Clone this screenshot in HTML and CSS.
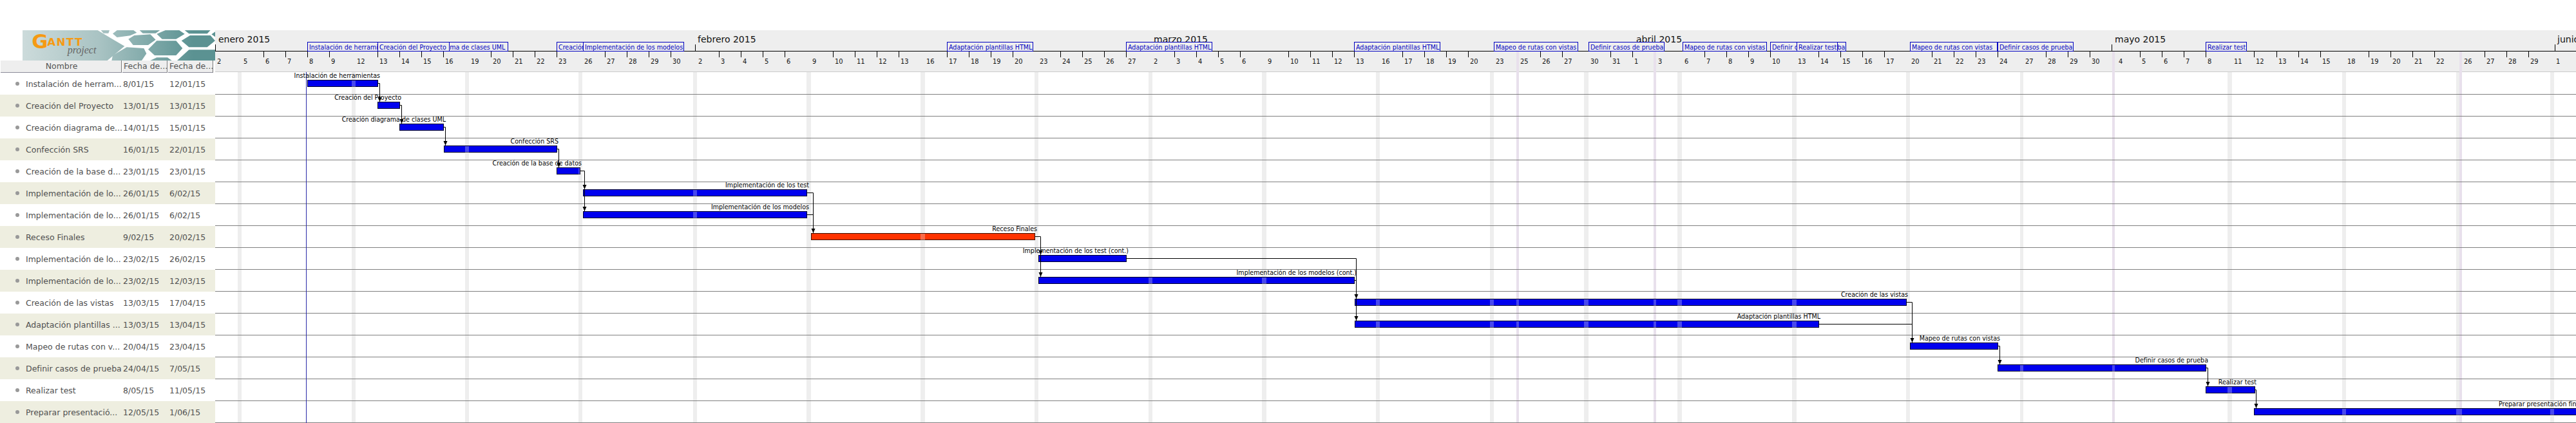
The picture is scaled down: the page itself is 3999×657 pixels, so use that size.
FILE: index.html
```html
<!DOCTYPE html>
<html lang="es">
<head>
    <meta charset="UTF-8">
    <title>GanttProject</title>
    <link rel="stylesheet" href="styles.css">
</head>
<body>
<div class="page">
    <div class="panel">
        <svg class="logo" viewBox="105 141 897 141" width="299" height="47">
            <defs>
                <linearGradient id="teal" gradientUnits="userSpaceOnUse" x1="105" y1="0" x2="900" y2="0">
                    <stop offset="0" stop-color="#ccdbdb"/>
                    <stop offset="0.45" stop-color="#a9c3c3"/>
                    <stop offset="1" stop-color="#5b9292"/>
                </linearGradient>
            </defs>
            <g fill="url(#teal)">
                <polygon points="105,141 455,141 520,180 580,215 500,282 105,282"/>
                <polygon points="470,141 510,141 505,155 482,155"/>
                <polygon points="525,157 545,141 622,141 637,152 606,166 545,174"/>
                <polygon points="650,141 745,141 725,155 665,155"/>
                <polygon points="598,182 625,165 700,160 725,185 690,210 620,210"/>
                <polygon points="730,158 770,141 835,141 860,158 820,182 755,182"/>
                <polygon points="860,141 980,141 965,157 880,157"/>
                <polygon points="845,190 885,165 980,165 1002,190 965,220 880,220"/>
                <polygon points="690,230 730,190 820,190 850,225 820,258 720,258"/>
                <polygon points="520,282 525,258 590,220 670,225 682,250 660,282"/>
                <polygon points="825,282 880,232 1002,232 1002,282"/>
                <polygon points="700,282 730,268 780,268 800,282"/>
                <polygon points="985,160 1002,148 1002,172"/>
            </g>
            <text class="logo-g" x="148" y="226">G</text>
            <text class="logo-antt" x="220" y="214">ANTT</text>
            <text class="logo-project" x="314" y="248">project</text>
        </svg>
        <div class="cols">
            <div class="col col-name">Nombre</div>
            <div class="col">Fecha de...</div>
            <div class="col">Fecha de...</div>
        </div>
        <div class="row"><span class="dot"></span><span class="name">Instalación de herram...</span><span class="date">8/01/15</span><span class="date">12/01/15</span></div>
        <div class="row"><span class="dot"></span><span class="name">Creación del Proyecto</span><span class="date">13/01/15</span><span class="date">13/01/15</span></div>
        <div class="row"><span class="dot"></span><span class="name">Creación diagrama de...</span><span class="date">14/01/15</span><span class="date">15/01/15</span></div>
        <div class="row"><span class="dot"></span><span class="name">Confección SRS</span><span class="date">16/01/15</span><span class="date">22/01/15</span></div>
        <div class="row"><span class="dot"></span><span class="name">Creación de la base d...</span><span class="date">23/01/15</span><span class="date">23/01/15</span></div>
        <div class="row"><span class="dot"></span><span class="name">Implementación de lo...</span><span class="date">26/01/15</span><span class="date">6/02/15</span></div>
        <div class="row"><span class="dot"></span><span class="name">Implementación de lo...</span><span class="date">26/01/15</span><span class="date">6/02/15</span></div>
        <div class="row"><span class="dot"></span><span class="name">Receso Finales</span><span class="date">9/02/15</span><span class="date">20/02/15</span></div>
        <div class="row"><span class="dot"></span><span class="name">Implementación de lo...</span><span class="date">23/02/15</span><span class="date">26/02/15</span></div>
        <div class="row"><span class="dot"></span><span class="name">Implementación de lo...</span><span class="date">23/02/15</span><span class="date">12/03/15</span></div>
        <div class="row"><span class="dot"></span><span class="name">Creación de las vistas</span><span class="date">13/03/15</span><span class="date">17/04/15</span></div>
        <div class="row"><span class="dot"></span><span class="name">Adaptación plantillas ...</span><span class="date">13/03/15</span><span class="date">13/04/15</span></div>
        <div class="row"><span class="dot"></span><span class="name">Mapeo de rutas con v...</span><span class="date">20/04/15</span><span class="date">23/04/15</span></div>
        <div class="row"><span class="dot"></span><span class="name">Definir casos de prueba</span><span class="date">24/04/15</span><span class="date">7/05/15</span></div>
        <div class="row"><span class="dot"></span><span class="name">Realizar test</span><span class="date">8/05/15</span><span class="date">11/05/15</span></div>
        <div class="row"><span class="dot"></span><span class="name">Preparar presentació...</span><span class="date">12/05/15</span><span class="date">1/06/15</span></div>
    </div>

    <!-- viewBox keeps the screenshot's coordinates, so x/y below are page pixels -->
    <svg class="chart" viewBox="334 47 3665 610" width="3665" height="610">
        <defs>
            <clipPath id="bar-area">
                <rect x="478" y="125" width="108" height="10"/>
                <rect x="587" y="159" width="33" height="10"/>
                <rect x="621" y="193" width="67" height="10"/>
                <rect x="690" y="227" width="174" height="10"/>
                <rect x="865" y="261" width="35" height="10"/>
                <rect x="906" y="295" width="346" height="10"/>
                <rect x="906" y="329" width="346" height="10"/>
                <rect x="1260" y="363" width="346" height="10"/>
                <rect x="1613" y="397" width="135" height="10"/>
                <rect x="1613" y="431" width="489" height="10"/>
                <rect x="2104" y="465" width="855" height="10"/>
                <rect x="2104" y="499" width="719" height="10"/>
                <rect x="2966" y="533" width="135" height="10"/>
                <rect x="3102" y="567" width="322" height="10"/>
                <rect x="3425" y="601" width="75" height="10"/>
                <rect x="3500" y="635" width="499" height="10"/>
            </clipPath>
        </defs>

        <rect class="head" x="334" y="47" width="3665" height="64"/>
        <path class="head-line" d="M334 111.5H3999"/>

        <path id="weekends" class="weekend" d="M369 112h6v545h-6zM546 112h6v545h-6zM722 112h6v545h-6zM898 112h6v545h-6zM1076 112h6v545h-6zM1252 112h7v545h-7zM1429 112h7v545h-7zM1606 112h6v545h-6zM1783 112h6v545h-6zM1959 112h7v545h-7zM2136 112h6v545h-6zM2313 112h6v545h-6zM2459 112h7v545h-7zM2604 112h7v545h-7zM2782 112h7v545h-7zM2959 112h6v545h-6zM3136 112h5v545h-5zM3458 112h7v545h-7zM3636 112h6v545h-6zM3813 112h5v545h-5zM3959 112h6v545h-6z"/>
        <path id="holidays" class="holiday" d="M2354 80h4v577h-4zM2567 80h4v577h-4zM3279 80h4v577h-4zM3818 80h4v577h-4z"/>

        <path class="row-lines" d="M334 146.5H3999M334 180.5H3999M334 214.5H3999M334 248.5H3999M334 282.5H3999M334 316.5H3999M334 350.5H3999M334 384.5H3999M334 418.5H3999M334 452.5H3999M334 486.5H3999M334 520.5H3999M334 554.5H3999M334 588.5H3999M334 622.5H3999M334 656.5H3999"/>
        <path class="today" d="M475.5 112V657"/>

        <!-- timeline -->
        <path class="scale" d="M334 79.5H3999"/>
        <path class="scale" d="M334.5 69V80M1079.5 69V80M3278.5 69V80M3966.5 69V80"/>
        <path class="scale" d="M409.5 80v9M443.5 80v9M477.5 80v9M511.5 80v9M586.5 80v9M620.5 80v9M654.5 80v9M688.5 80v9M762.5 80v9M796.5 80v9M830.5 80v9M864.5 80v9M939.5 80v9M973.5 80v9M1007.5 80v9M1041.5 80v9M1116.5 80v9M1150.5 80v9M1184.5 80v9M1218.5 80v9M1293.5 80v9M1327.5 80v9M1361.5 80v9M1395.5 80v9M1470.5 80v9M1504.5 80v9M1538.5 80v9M1572.5 80v9M1646.5 80v9M1680.5 80v9M1714.5 80v9M1748.5 80v9M1823.5 80v9M1857.5 80v9M1891.5 80v9M1925.5 80v9M2000.5 80v9M2034.5 80v9M2068.5 80v9M2102.5 80v9M2177.5 80v9M2211.5 80v9M2245.5 80v9M2279.5 80v9M2391.5 80v9M2425.5 80v9M2500.5 80v9M2534.5 80v9M2646.5 80v9M2680.5 80v9M2714.5 80v9M2748.5 80v9M2823.5 80v9M2857.5 80v9M2891.5 80v9M2925.5 80v9M2999.5 80v9M3033.5 80v9M3067.5 80v9M3101.5 80v9M3176.5 80v9M3210.5 80v9M3244.5 80v9M3322.5 80v9M3356.5 80v9M3390.5 80v9M3424.5 80v9M3499.5 80v9M3534.5 80v9M3568.5 80v9M3602.5 80v9M3677.5 80v9M3711.5 80v9M3745.5 80v9M3779.5 80v9M3857.5 80v9M3891.5 80v9M3925.5 80v9"/>

        <g class="months">
            <text x="339" y="66">enero 2015</text>
            <text x="1083" y="66">febrero 2015</text>
            <text x="1791" y="66">marzo 2015</text>
            <text x="2540" y="66">abril 2015</text>
            <text x="3283" y="66">mayo 2015</text>
            <text x="3970" y="66">junio 2015</text>
        </g>

        <g class="days">
            <text x="337">2</text><text x="378">5</text><text x="412">6</text><text x="446">7</text><text x="480">8</text><text x="514">9</text><text x="554">12</text><text x="589">13</text><text x="623">14</text><text x="657">15</text><text x="691">16</text><text x="731">19</text><text x="765">20</text><text x="799">21</text><text x="833">22</text><text x="867">23</text><text x="907">26</text><text x="942">27</text><text x="976">28</text><text x="1010">29</text><text x="1044">30</text>
            <text x="1084">2</text><text x="1119">3</text><text x="1153">4</text><text x="1187">5</text><text x="1221">6</text><text x="1261">9</text><text x="1296">10</text><text x="1330">11</text><text x="1364">12</text><text x="1398">13</text><text x="1438">16</text><text x="1473">17</text><text x="1507">18</text><text x="1541">19</text><text x="1575">20</text><text x="1614">23</text><text x="1649">24</text><text x="1683">25</text><text x="1717">26</text><text x="1751">27</text>
            <text x="1791">2</text><text x="1826">3</text><text x="1860">4</text><text x="1894">5</text><text x="1928">6</text><text x="1968">9</text><text x="2003">10</text><text x="2037">11</text><text x="2071">12</text><text x="2105">13</text><text x="2145">16</text><text x="2180">17</text><text x="2214">18</text><text x="2248">19</text><text x="2282">20</text><text x="2322">23</text><text x="2360">25</text><text x="2394">26</text><text x="2428">27</text><text x="2469">30</text><text x="2503">31</text>
            <text x="2537">1</text><text x="2574">3</text><text x="2615">6</text><text x="2649">7</text><text x="2683">8</text><text x="2717">9</text><text x="2751">10</text><text x="2791">13</text><text x="2826">14</text><text x="2860">15</text><text x="2894">16</text><text x="2928">17</text><text x="2967">20</text><text x="3002">21</text><text x="3036">22</text><text x="3070">23</text><text x="3104">24</text><text x="3144">27</text><text x="3179">28</text><text x="3213">29</text><text x="3247">30</text>
            <text x="3289">4</text><text x="3325">5</text><text x="3359">6</text><text x="3393">7</text><text x="3427">8</text><text x="3468">11</text><text x="3502">12</text><text x="3537">13</text><text x="3571">14</text><text x="3605">15</text><text x="3644">18</text><text x="3680">19</text><text x="3714">20</text><text x="3748">21</text><text x="3782">22</text><text x="3825">26</text><text x="3860">27</text><text x="3894">28</text><text x="3928">29</text><text x="3968">1</text>
        </g>

        <!-- task boxes on the timeline, later ones sit over earlier ones -->
        <g class="flags">
            <svg x="477" y="65" width="110" height="15"><rect x=".5" y=".5" width="109" height="14"/><text x="3" y="12">Instalación de herramientas</text></svg>
            <svg x="620" y="65" width="169" height="15"><rect x=".5" y=".5" width="168" height="14"/><text x="3" y="12">Creación diagrama de clases UML</text></svg>
            <svg x="586" y="65" width="112" height="15"><rect x=".5" y=".5" width="111" height="14"/><text x="3" y="12">Creación del Proyecto</text></svg>
            <svg x="864" y="65" width="42" height="15"><rect x=".5" y=".5" width="41" height="14"/><text x="3" y="12">Creación de la base de datos</text></svg>
            <svg x="905" y="65" width="157" height="15"><rect x=".5" y=".5" width="156" height="14"/><text x="3" y="12">Implementación de los modelos</text></svg>
            <svg x="1470" y="65" width="134" height="15"><rect x=".5" y=".5" width="133" height="14"/><text x="3" y="12">Adaptación plantillas HTML</text></svg>
            <svg x="1748" y="65" width="134" height="15"><rect x=".5" y=".5" width="133" height="14"/><text x="3" y="12">Adaptación plantillas HTML</text></svg>
            <svg x="2102" y="65" width="134" height="15"><rect x=".5" y=".5" width="133" height="14"/><text x="3" y="12">Adaptación plantillas HTML</text></svg>
            <svg x="2319" y="65" width="131" height="15"><rect x=".5" y=".5" width="130" height="14"/><text x="3" y="12">Mapeo de rutas con vistas</text></svg>
            <svg x="2466" y="65" width="118" height="15"><rect x=".5" y=".5" width="117" height="14"/><text x="3" y="12">Definir casos de prueba</text></svg>
            <svg x="2612" y="65" width="131" height="15"><rect x=".5" y=".5" width="130" height="14"/><text x="3" y="12">Mapeo de rutas con vistas</text></svg>
            <svg x="2748" y="65" width="118" height="15"><rect x=".5" y=".5" width="117" height="14"/><text x="3" y="12">Definir casos de prueba</text></svg>
            <svg x="2789" y="65" width="64" height="15"><rect x=".5" y=".5" width="63" height="14"/><text x="3" y="12">Realizar test</text></svg>
            <svg x="2965" y="65" width="136" height="15"><rect x=".5" y=".5" width="135" height="14"/><text x="3" y="12">Mapeo de rutas con vistas</text></svg>
            <svg x="3101" y="65" width="118" height="15"><rect x=".5" y=".5" width="117" height="14"/><text x="3" y="12">Definir casos de prueba</text></svg>
            <svg x="3424" y="65" width="64" height="15"><rect x=".5" y=".5" width="63" height="14"/><text x="3" y="12">Realizar test</text></svg>
        </g>

        <!-- task bars -->
        <g class="bars">
            <rect x="477.5" y="124.5" width="109" height="10"/>
            <rect x="586.5" y="158.5" width="34" height="10"/>
            <rect x="620.5" y="192.5" width="68" height="10"/>
            <rect x="689.5" y="226.5" width="175" height="10"/>
            <rect x="864.5" y="260.5" width="36" height="10"/>
            <rect x="905.5" y="294.5" width="347" height="10"/>
            <rect x="905.5" y="328.5" width="347" height="10"/>
            <rect class="bar-red" x="1259.5" y="362.5" width="347" height="10"/>
            <rect x="1612.5" y="396.5" width="136" height="10"/>
            <rect x="1612.5" y="430.5" width="490" height="10"/>
            <rect x="2103.5" y="464.5" width="856" height="10"/>
            <rect x="2103.5" y="498.5" width="720" height="10"/>
            <rect x="2965.5" y="532.5" width="136" height="10"/>
            <rect x="3101.5" y="566.5" width="323" height="10"/>
            <rect x="3424.5" y="600.5" width="76" height="10"/>
            <rect x="3499.5" y="634.5" width="520" height="10"/>
        </g>
        <g class="bar-shade" clip-path="url(#bar-area)">
            <use href="#weekends"/>
            <use href="#holidays"/>
        </g>

        <g class="labels">
            <text x="590" y="121">Instalación de herramientas</text>
            <text x="623" y="155">Creación del Proyecto</text>
            <text x="692" y="189">Creación diagrama de clases UML</text>
            <text x="867" y="223">Confección SRS</text>
            <text x="903" y="257">Creación de la base de datos</text>
            <text x="1256" y="291">Implementación de los test</text>
            <text x="1256" y="325">Implementación de los modelos</text>
            <text x="1610" y="359">Receso Finales</text>
            <text x="1752" y="393">Implementación de los test (cont.)</text>
            <text x="2106" y="427">Implementación de los modelos (cont.)</text>
            <text x="2962" y="461">Creación de las vistas</text>
            <text x="2826" y="495">Adaptación plantillas HTML</text>
            <text x="3105" y="529">Mapeo de rutas con vistas</text>
            <text x="3428" y="563">Definir casos de prueba</text>
            <text x="3503" y="597">Realizar test</text>
            <text x="4008" y="631">Preparar presentación final</text>
        </g>

        <!-- dependencies -->
        <path class="dep" d="M587 129.5H589.5V158M621 163.5H623.5V192M689 197.5H691.5V226M865 231.5H867.5V260M901 265.5H907.5V328M1253 299.5H1262.5V362M1253 333.5H1262.5M1607 367.5H1615.5V430M1749 401.5H2105.5V498M2103 435.5H2105.5M2960 469.5H2968.5V532M2824 503.5H2968.5M3102 537.5H3104.5V566M3425 571.5H3427.5V600M3501 605.5H3502.5V634"/>
        <path class="arrow" d="M586.5 151h6l-3 7zM620.5 185h6l-3 7zM688.5 219h6l-3 7zM864.5 253h6l-3 7zM904.5 287h6l-3 7zM904.5 321h6l-3 7zM1259.5 355h6l-3 7zM1612.5 389h6l-3 7zM1612.5 423h6l-3 7zM2102.5 457h6l-3 7zM2102.5 491h6l-3 7zM2965.5 525h6l-3 7zM3101.5 559h6l-3 7zM3424.5 593h6l-3 7zM3499.5 627h6l-3 7z"/>
    </svg>
</div>
</body>
</html>
```

FILE: styles.css
```css
body { margin: 0; background: #fff; font-family: "DejaVu Sans", sans-serif; overflow: hidden; }
.page { display: flex; align-items: flex-start; width: 3999px; height: 657px; padding-top: 47px; box-sizing: border-box; overflow: hidden; }

.panel { flex: none; width: 334px; }
.logo { display: block; margin-left: 35px; }
.logo-g { font: bold 92px "DejaVu Sans", sans-serif; fill: #f59a12; }
.logo-antt { font: bold 50px "DejaVu Sans", sans-serif; letter-spacing: 4px; fill: #f59a12; }
.logo-project { font: italic 48px "Liberation Serif", serif; fill: #666; }

.cols { display: flex; height: 19px; padding-left: 1px; }
.col { flex: none; width: 70px; margin-right: 1px; box-sizing: border-box; background: #eee; border-right: 1px solid #777; border-bottom: 1px solid #8a8a98; color: #555; font-size: 12.5px; line-height: 18px; padding-left: 2px; white-space: nowrap; }
.col-name { width: 188px; text-align: center; }

.row { display: flex; align-items: center; height: 34px; color: #505050; font-size: 12.5px; white-space: nowrap; }
.row:nth-child(even) { background: #eeeee0; }
.dot { flex: none; width: 6px; height: 6px; margin-left: 24px; margin-right: 10px; border-radius: 50%; background: #999; }
.name { flex: none; width: 151px; }
.date { flex: none; width: 72px; }

.chart { flex: none; display: block; }
.head { fill: #eee; }
.head-line { stroke: #ccc; }
.weekend { fill: #eee; }
.holiday { fill: #e8e0ec; }
.row-lines { stroke: #808080; fill: none; }
.today { stroke: #2a2aa8; fill: none; }
.scale { stroke: #000; fill: none; }

.months text { font-size: 14px; fill: #111; }
.days text { font-family: "DejaVu Sans Condensed", "DejaVu Sans", sans-serif; font-stretch: condensed; font-size: 11px; fill: #111; }
.days { transform: translateY(99px); }

.flags rect { fill: #eee; stroke: #0000c0; }
.flags text { font-family: "DejaVu Sans Condensed", "DejaVu Sans", sans-serif; font-stretch: condensed; font-size: 10.6px; fill: #0000c0; }

.bars rect { fill: #0000ee; stroke: #000028; }
.bars .bar-red { fill: #ff3300; stroke: #401000; }
.bar-shade { fill: #fff; opacity: .3; }

.labels text { font-family: "DejaVu Sans Condensed", "DejaVu Sans", sans-serif; font-stretch: condensed; font-size: 10.6px; fill: #000; text-anchor: end; }

.dep { stroke: #000; fill: none; }
.arrow { fill: #000; }
```
